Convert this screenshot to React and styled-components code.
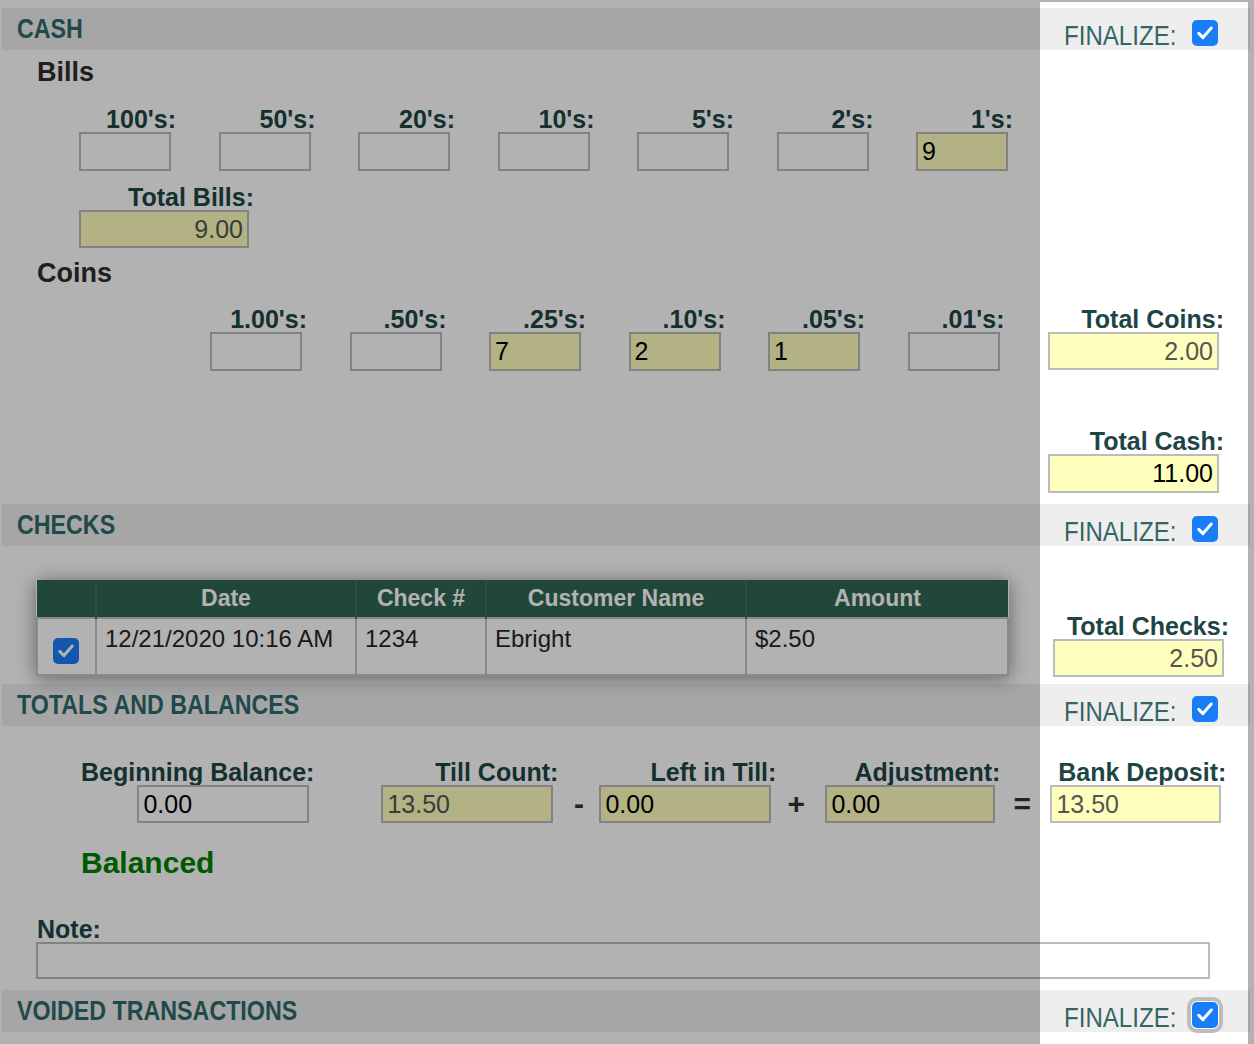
import React from 'react';
import styled, { createGlobalStyle, css } from 'styled-components';

const GlobalStyle = createGlobalStyle`
  html, body { margin: 0; padding: 0; background: #ffffff; }
  body { font-family: "Liberation Sans", Arial, sans-serif; overflow: hidden; }
  *, *::before, *::after { box-sizing: border-box; }
`;

const Page = styled.div`
  width: 1248px;
  margin-left: 2px;
  padding-top: 8px;
  padding-bottom: 40px;
`;

const Spotlight = styled.div`
  position: fixed;
  left: 1040px;
  top: 2px;
  width: 208px;
  bottom: 0;
  pointer-events: none;
  box-shadow: 0 0 0 4000px rgba(0, 0, 0, 0.3);
  z-index: 10;
`;

const SectionHeader = styled.div`
  display: grid;
  grid-template-columns: 1038px 210px;
  height: 42px;
  background: #eeeeee;
`;

/* condensed display face: the regular sans, narrowed */
const SectionTitle = styled.h2`
  margin: 0;
  padding-left: 15px;
  font-weight: 700;
  font-size: 28px;
  line-height: 42px;
  color: #2e6b6b;
  white-space: nowrap;
  transform: scaleX(0.83);
  transform-origin: 15px 50%;
`;

const FinalizeCell = styled.label`
  display: flex;
  align-items: flex-end;
  padding-left: 24px;
`;

const FinalizeText = styled.span`
  display: inline-block;
  flex: none;
  width: 128px;
  font-size: 28px;
  line-height: 28px;
  color: #356565;
  white-space: nowrap;
  transform: scaleX(0.86);
  transform-origin: 0 50%;
`;

const CheckBox = styled.span`
  display: inline-flex;
  align-items: center;
  justify-content: center;
  flex: none;
  width: 26px;
  height: 26px;
  border-radius: 5px;
  background: #1a7df8;
  margin-bottom: ${(p) => p.$mb || 0}px;
  ${(p) =>
    p.$focused &&
    css`
      box-shadow: 0 0 0 1px #ffffff, 0 0 0 5px #bdbdbd;
    `}
`;

const Check = ({ mb, focused }) => (
  <CheckBox role="checkbox" aria-checked="true" $mb={mb} $focused={focused}>
    <svg width="20" height="20" viewBox="0 0 24 24">
      <path
        d="M4.5 12.5 L9.5 17.5 L19.5 6"
        fill="none"
        stroke="#ffffff"
        strokeWidth="3.6"
        strokeLinecap="round"
        strokeLinejoin="round"
      />
    </svg>
  </CheckBox>
);

const Header = ({ title, focused }) => (
  <SectionHeader>
    <SectionTitle>{title}</SectionTitle>
    <FinalizeCell>
      <FinalizeText>FINALIZE:</FinalizeText>
      <Check mb={4} focused={focused} />
    </FinalizeCell>
  </SectionHeader>
);

const SectionBody = styled.div`
  display: grid;
  grid-template-columns: 1038px 210px;
  align-items: start;
  padding-bottom: ${(p) => p.$pb || 0}px;
`;

const MainCell = styled.div`
  grid-column: 1;
  grid-row: ${(p) => p.$row || 'auto'};
  margin-top: ${(p) => p.$mt || 0}px;
`;

const SideCell = styled.div`
  grid-column: 2;
  grid-row: ${(p) => p.$row || 'auto'};
  margin-top: ${(p) => p.$mt || 0}px;
  padding-left: ${(p) => p.$pl || 8}px;
`;

const SubHeading = styled.h3`
  margin: ${(p) => p.$mt || 0}px 0 0 35px;
  font-weight: 700;
  font-size: 27px;
  line-height: 30px;
  color: #332b2b;
`;

const DenomRow = styled.div`
  display: flex;
  gap: 42.5px;
  margin-left: ${(p) => p.$ml}px;
  margin-top: ${(p) => p.$mt || 0}px;
`;

const Line = styled.div`
  display: flex;
  margin-left: ${(p) => p.$ml || 0}px;
  margin-top: ${(p) => p.$mt || 0}px;
`;

const Field = styled.div`
  display: inline-flex;
  flex-direction: column;
  align-items: flex-end;
  flex: none;
`;

const FieldLabel = styled.label`
  font-weight: 700;
  font-size: 25px;
  line-height: 26px;
  color: #1d4545;
  white-space: nowrap;
`;

const Box = styled.input`
  display: block;
  width: ${(p) => p.$w}px;
  height: ${(p) => p.$h || 38}px;
  margin: 0 5px 0 0;
  padding: 0 4px;
  border: 2px solid #bbbbbb;
  border-radius: 0;
  background: ${(p) => (p.$filled ? '#ffffbd' : '#ffffff')};
  font-family: "Liberation Sans", Arial, sans-serif;
  font-size: 25px;
  color: ${(p) => (p.$muted ? '#555555' : '#000000')};
  text-align: ${(p) => (p.$right ? 'right' : 'left')};
  outline: none;
`;

const LabeledBox = ({ label, value = '', w, h, filled, muted, right }) => (
  <Field>
    <FieldLabel>{label}</FieldLabel>
    <Box
      type="text"
      readOnly
      value={value}
      $w={w}
      $h={h}
      $filled={filled ?? value !== ''}
      $muted={muted}
      $right={right}
    />
  </Field>
);

const bills = [
  ["100's:", ''],
  ["50's:", ''],
  ["20's:", ''],
  ["10's:", ''],
  ["5's:", ''],
  ["2's:", ''],
  ["1's:", '9'],
];

const coins = [
  ["1.00's:", ''],
  [".50's:", ''],
  [".25's:", '7'],
  [".10's:", '2'],
  [".05's:", '1'],
  [".01's:", ''],
];

/* Checks table */
const Table = styled.table`
  margin: 34px 0 0 34px;
  width: 971px;
  table-layout: fixed;
  border-collapse: collapse;
  box-shadow: 0 2px 18px rgba(0, 0, 0, 0.45);
`;

const Th = styled.th`
  width: ${(p) => p.$w}px;
  height: 38px;
  padding: 0;
  background: #306653;
  border-left: 2px solid #3b7460;
  color: #ffffff;
  font-weight: 700;
  font-size: 23px;
  text-align: center;
  vertical-align: middle;
  &:first-child { border-left: none; }
`;

const Td = styled.td`
  height: 57px;
  padding: ${(p) => (p.$center ? '19px 2px 0 0' : '6px 8px 0')};
  border: 2px solid #c4c4c4;
  font-size: 24px;
  line-height: 28px;
  color: #2b2525;
  text-align: ${(p) => (p.$center ? 'center' : 'left')};
  vertical-align: top;
  white-space: nowrap;
`;

/* Totals row */
const TotalsRow = styled.div`
  display: flex;
  align-items: flex-end;
  margin: 33px 0 0 79px;
`;

const Spacer = styled.span`
  width: ${(p) => p.$w}px;
  flex: none;
`;

const Op = styled.span`
  flex: none;
  width: ${(p) => p.$w}px;
  height: 38px;
  padding-right: ${(p) => p.$pr || 0}px;
  font-weight: 700;
  font-size: 30px;
  line-height: 38px;
  text-align: center;
  color: #333333;
`;

const Balanced = styled.div`
  margin: 23px 0 0 79px;
  font-weight: 700;
  font-size: 30px;
  line-height: 34px;
  color: #008000;
`;

const NoteLabel = styled.label`
  display: block;
  margin: 36px 0 0 35px;
  font-weight: 700;
  font-size: 25px;
  line-height: 26px;
  color: #1d4545;
`;

const NoteInput = styled.input`
  display: block;
  margin-left: 34px;
  width: 1174px;
  height: 37px;
  border: 2px solid #bbbbbb;
  border-radius: 0;
  background: #ffffff;
  outline: none;
  font-family: "Liberation Sans", Arial, sans-serif;
  font-size: 22px;
`;

const TotalsBody = styled.div`
  padding-bottom: 11px;
`;

export default function App() {
  return (
    <>
      <GlobalStyle />
      <Page>
        <Header title="CASH" />
        <SectionBody $pb={11}>
          <MainCell $row={1} $mt={7}>
            <SubHeading>Bills</SubHeading>
            <DenomRow $ml={77} $mt={19}>
              {bills.map(([l, v]) => (
                <LabeledBox key={l} label={l} value={v} w={92} h={39} />
              ))}
            </DenomRow>
            <Line $ml={77} $mt={13}>
              <LabeledBox label="Total Bills:" value="9.00" w={170} muted right />
            </Line>
            <SubHeading $mt={10}>Coins</SubHeading>
          </MainCell>
          <MainCell $row={2} $mt={18}>
            <DenomRow $ml={208}>
              {coins.map(([l, v]) => (
                <LabeledBox key={l} label={l} value={v} w={92} h={39} />
              ))}
            </DenomRow>
          </MainCell>
          <SideCell $row={2} $mt={18}>
            <LabeledBox label="Total Coins:" value="2.00" w={171} muted right />
          </SideCell>
          <SideCell $row={3} $mt={57}>
            <LabeledBox label="Total Cash:" value="11.00" w={171} h={39} right />
          </SideCell>
        </SectionBody>

        <Header title="CHECKS" />
        <SectionBody $pb={7}>
          <MainCell $row={1}>
            <Table>
              <thead>
                <tr>
                  <Th $w={59} />
                  <Th $w={260}>Date</Th>
                  <Th $w={130}>Check #</Th>
                  <Th $w={260}>Customer Name</Th>
                  <Th $w={262}>Amount</Th>
                </tr>
              </thead>
              <tbody>
                <tr>
                  <Td $center>
                    <Check />
                  </Td>
                  <Td>12/21/2020 10:16 AM</Td>
                  <Td>1234</Td>
                  <Td>Ebright</Td>
                  <Td>$2.50</Td>
                </tr>
              </tbody>
            </Table>
          </MainCell>
          <SideCell $row={1} $mt={67} $pl={13}>
            <LabeledBox label="Total Checks:" value="2.50" w={171} muted right />
          </SideCell>
        </SectionBody>

        <Header title="TOTALS AND BALANCES" />
        <TotalsBody>
          <TotalsRow>
            <LabeledBox label="Beginning Balance:" value="0.00" w={172} filled={false} />
            <Spacer $w={67} />
            <LabeledBox label="Till Count:" value="13.50" w={172} muted />
            <Op $w={41}>-</Op>
            <LabeledBox label="Left in Till:" value="0.00" w={172} />
            <Op $w={49} $pr={9}>+</Op>
            <LabeledBox label="Adjustment:" value="0.00" w={170} />
            <Op $w={50} $pr={6}>=</Op>
            <LabeledBox label="Bank Deposit:" value="13.50" w={171} muted />
          </TotalsRow>
          <Balanced>Balanced</Balanced>
          <NoteLabel htmlFor="note">Note:</NoteLabel>
          <NoteInput id="note" type="text" readOnly value="" />
        </TotalsBody>

        <Header title="VOIDED TRANSACTIONS" focused />
      </Page>
      <Spotlight />
    </>
  );
}
